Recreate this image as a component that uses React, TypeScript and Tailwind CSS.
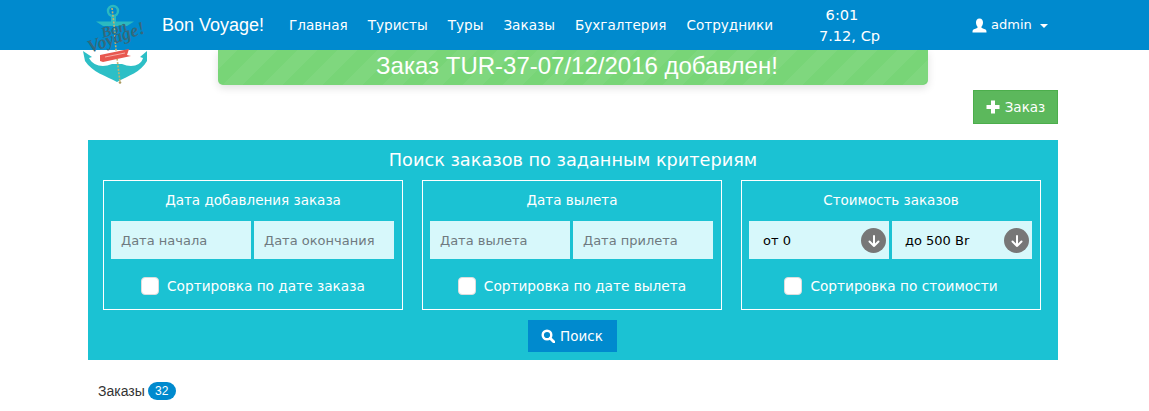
import React from "react";

const verdana = "font-['DejaVu_Sans',Verdana,sans-serif]";

function Logo() {
  return (
    <svg width="70" height="90" viewBox="80 0 70 90" className="absolute left-[80px] top-0 z-20">
      <circle cx="113" cy="11" r="5" fill="none" stroke="#2bb9c0" strokeWidth="2.4" />
      <path d="M111 15 H116 V22 H111 Z" fill="#2bb9c0" />
      <path d="M96 21.5 H134 L127 26 H103 Z" fill="#2bb9c0" />
      <path d="M83 51 L92 57 L89 58 C93 66 103 68 112 64 L122 64 C131 68 141 66 143 58 L140 57 L147 51 L147 61 C141 72 128 76 117 82 C106 76 92 72 85 61 Z" fill="#2dbfc6" />
      <path d="M112 8 L114 24 L116 50 L120 82" stroke="#c9b267" strokeWidth="1.6" strokeDasharray="2 1.4" fill="none" />
      <circle cx="120" cy="82.5" r="1.3" fill="#a99a60" />
      <path d="M100 55 L129 49 L127 55 L131 56 L103 62 L100 61 Z" fill="#e8584f" />
      <path d="M105 57 L125 53" stroke="#f7c4bd" strokeWidth="0.8" />
      <text x="103" y="38" fontFamily="'Liberation Serif',serif" fontStyle="italic" fontWeight="700" fontSize="15" fill="#35697c" transform="rotate(-18 103 38)">Bon</text>
      <text x="90" y="53" fontFamily="'Liberation Serif',serif" fontStyle="italic" fontWeight="700" fontSize="18" fill="#35697c" transform="rotate(-20 90 53)">Voyage!</text>
    </svg>
  );
}

function DownCircle() {
  return (
    <span className="absolute right-[3px] top-[7px] flex h-[25px] w-[25px] items-center justify-center rounded-full bg-[#777777]">
      <svg width="14" height="14" viewBox="0 0 14 14" fill="none" stroke="white" strokeWidth="2" strokeLinecap="round" strokeLinejoin="round">
        <path d="M7 2 V12 M2.5 7.5 L7 12 L11.5 7.5" />
      </svg>
    </span>
  );
}

function Check({ label }: { label: string }) {
  return (
    <div className="mt-[17px] flex items-center justify-center gap-2">
      <span className="h-[18px] w-[18px] rounded-[4px] border border-[#dddddd] bg-white" />
      <span className="text-[13.7px] text-white">{label}</span>
    </div>
  );
}

function Box({ title, children, label }: { title: string; children: React.ReactNode; label: string }) {
  return (
    <div className="h-[130px] w-[300px] border border-white px-[7px] pt-[9px]">
      <div className="h-[20px] text-center text-[13.5px] leading-[20px] text-white">{title}</div>
      <div className="mt-[11px] flex gap-[3px]">{children}</div>
      <Check label={label} />
    </div>
  );
}

function Field({ text }: { text: string }) {
  return <div className="h-[38px] w-[140px] bg-[#d7f8fb] pl-[10px] text-[13px] leading-[39px] text-[#6f7a80]">{text}</div>;
}

function Select({ text, pad }: { text: string; pad: string }) {
  return (
    <div className={`relative h-[38px] w-[140px] bg-[#d7f8fb] text-[13px] leading-[39px] text-black ${pad}`}>
      {text}
      <DownCircle />
    </div>
  );
}

const nav = ["Главная", "Туристы", "Туры", "Заказы", "Бухгалтерия", "Сотрудники"];

export default function App() {
  return (
    <div className={`relative h-[411px] w-[1149px] overflow-hidden bg-white ${verdana}`}>
      <Logo />
      <header className="relative z-10 flex h-[50px] items-center bg-[#008ace] pl-[162px] text-white">
        <span className="w-[127px] font-['Liberation_Sans',Arial,sans-serif] text-[18px]">Bon Voyage!</span>
        <nav className="flex w-[510px] gap-[20px] text-[13.6px]">
          {nav.map((n) => (
            <span key={n}>{n}</span>
          ))}
        </nav>
        <div className="w-[101px] text-center text-[14.6px] leading-[21px]">
          <div className="pr-[15px]">6:01</div>
          <div>7.12, Ср</div>
        </div>
        <div className="ml-[72px] flex items-center gap-[4px] text-[13px]">
          <svg width="15" height="15" viewBox="0 0 15 15" fill="white">
            <path d="M7.5 0.5 C10 0.5 11 2.5 11 4.5 C11 6.5 10 8 9.3 9 C9.3 10 11 10.5 13 11.3 C14.5 12 14.5 13 14.5 14.5 L0.5 14.5 C0.5 13 0.5 12 2 11.3 C4 10.5 5.7 10 5.7 9 C5 8 4 6.5 4 4.5 C4 2.5 5 0.5 7.5 0.5 Z" />
          </svg>
          <span>admin</span>
          <span className="ml-[4px] mt-[1px] h-0 w-0 border-x-[4px] border-t-[4px] border-x-transparent border-t-white" />
        </div>
      </header>

      <div className="ml-[218px] flex h-[35px] w-[710px] items-center justify-center rounded-b-[5px] bg-[#78d577] bg-[linear-gradient(135deg,rgba(255,255,255,0.05)_25%,transparent_25%,transparent_50%,rgba(255,255,255,0.05)_50%,rgba(255,255,255,0.05)_75%,transparent_75%,transparent)] bg-[length:40px_40px] pb-[3px] pl-[8px] font-['Liberation_Sans',Arial,sans-serif] text-[24px] text-white shadow-[0_3px_8px_rgba(0,0,0,0.12)]">
        Заказ TUR-37-07/12/2016 добавлен!
      </div>

      <div className="ml-[88px] w-[970px]">
        <div className="mt-[5px] flex justify-end">
          <div className="flex h-[34px] w-[85px] items-center justify-center gap-[5px] border border-[#4cae4c] bg-[#5cb85c] text-[13.5px] text-white">
            <svg width="14" height="14" viewBox="0 0 14 14" fill="white">
              <path d="M5 0.5 H9 V5 H13.5 V9 H9 V13.5 H5 V9 H0.5 V5 H5 Z" />
            </svg>
            Заказ
          </div>
        </div>

        <section className="mt-[16px] h-[220px] bg-[#1bc2d3] px-[15px] pt-[9px]">
          <h2 className="h-[22px] text-center text-[17.7px] font-normal leading-[22px] text-white">Поиск заказов по заданным критериям</h2>
          <div className="mt-[9px] flex gap-[19px]">
            <Box title="Дата добавления заказа" label="Сортировка по дате заказа">
              <Field text="Дата начала" />
              <Field text="Дата окончания" />
            </Box>
            <Box title="Дата вылета" label="Сортировка по дате вылета">
              <Field text="Дата вылета" />
              <Field text="Дата прилета" />
            </Box>
            <Box title="Стоимость заказов" label="Сортировка по стоимости">
              <Select text="от 0" pad="pl-[14px]" />
              <Select text="до 500 Br" pad="pl-[13px]" />
            </Box>
          </div>
          <div className="mt-[10px] flex justify-center pr-[2px]">
            <div className="flex h-[32px] w-[89px] items-center justify-center gap-[5px] bg-[#008ace] text-[13.5px] text-white">
              <svg width="14" height="14" viewBox="0 0 14 14" fill="none" stroke="white">
                <circle cx="6" cy="6" r="4.3" strokeWidth="2.4" />
                <path d="M9.2 9.2 L13 13" strokeWidth="2.8" strokeLinecap="round" />
              </svg>
              Поиск
            </div>
          </div>
        </section>

        <div className="ml-[10px] mt-[22px] flex h-[18px] items-center gap-[3px] font-['Liberation_Sans',Arial,sans-serif] text-[14px] text-[#333333]">
          <span>Заказы</span>
          <span className="flex h-[18px] w-[28px] items-center justify-center rounded-full bg-[#008ace] text-[12px] font-normal text-white">32</span>
        </div>
      </div>
    </div>
  );
}
